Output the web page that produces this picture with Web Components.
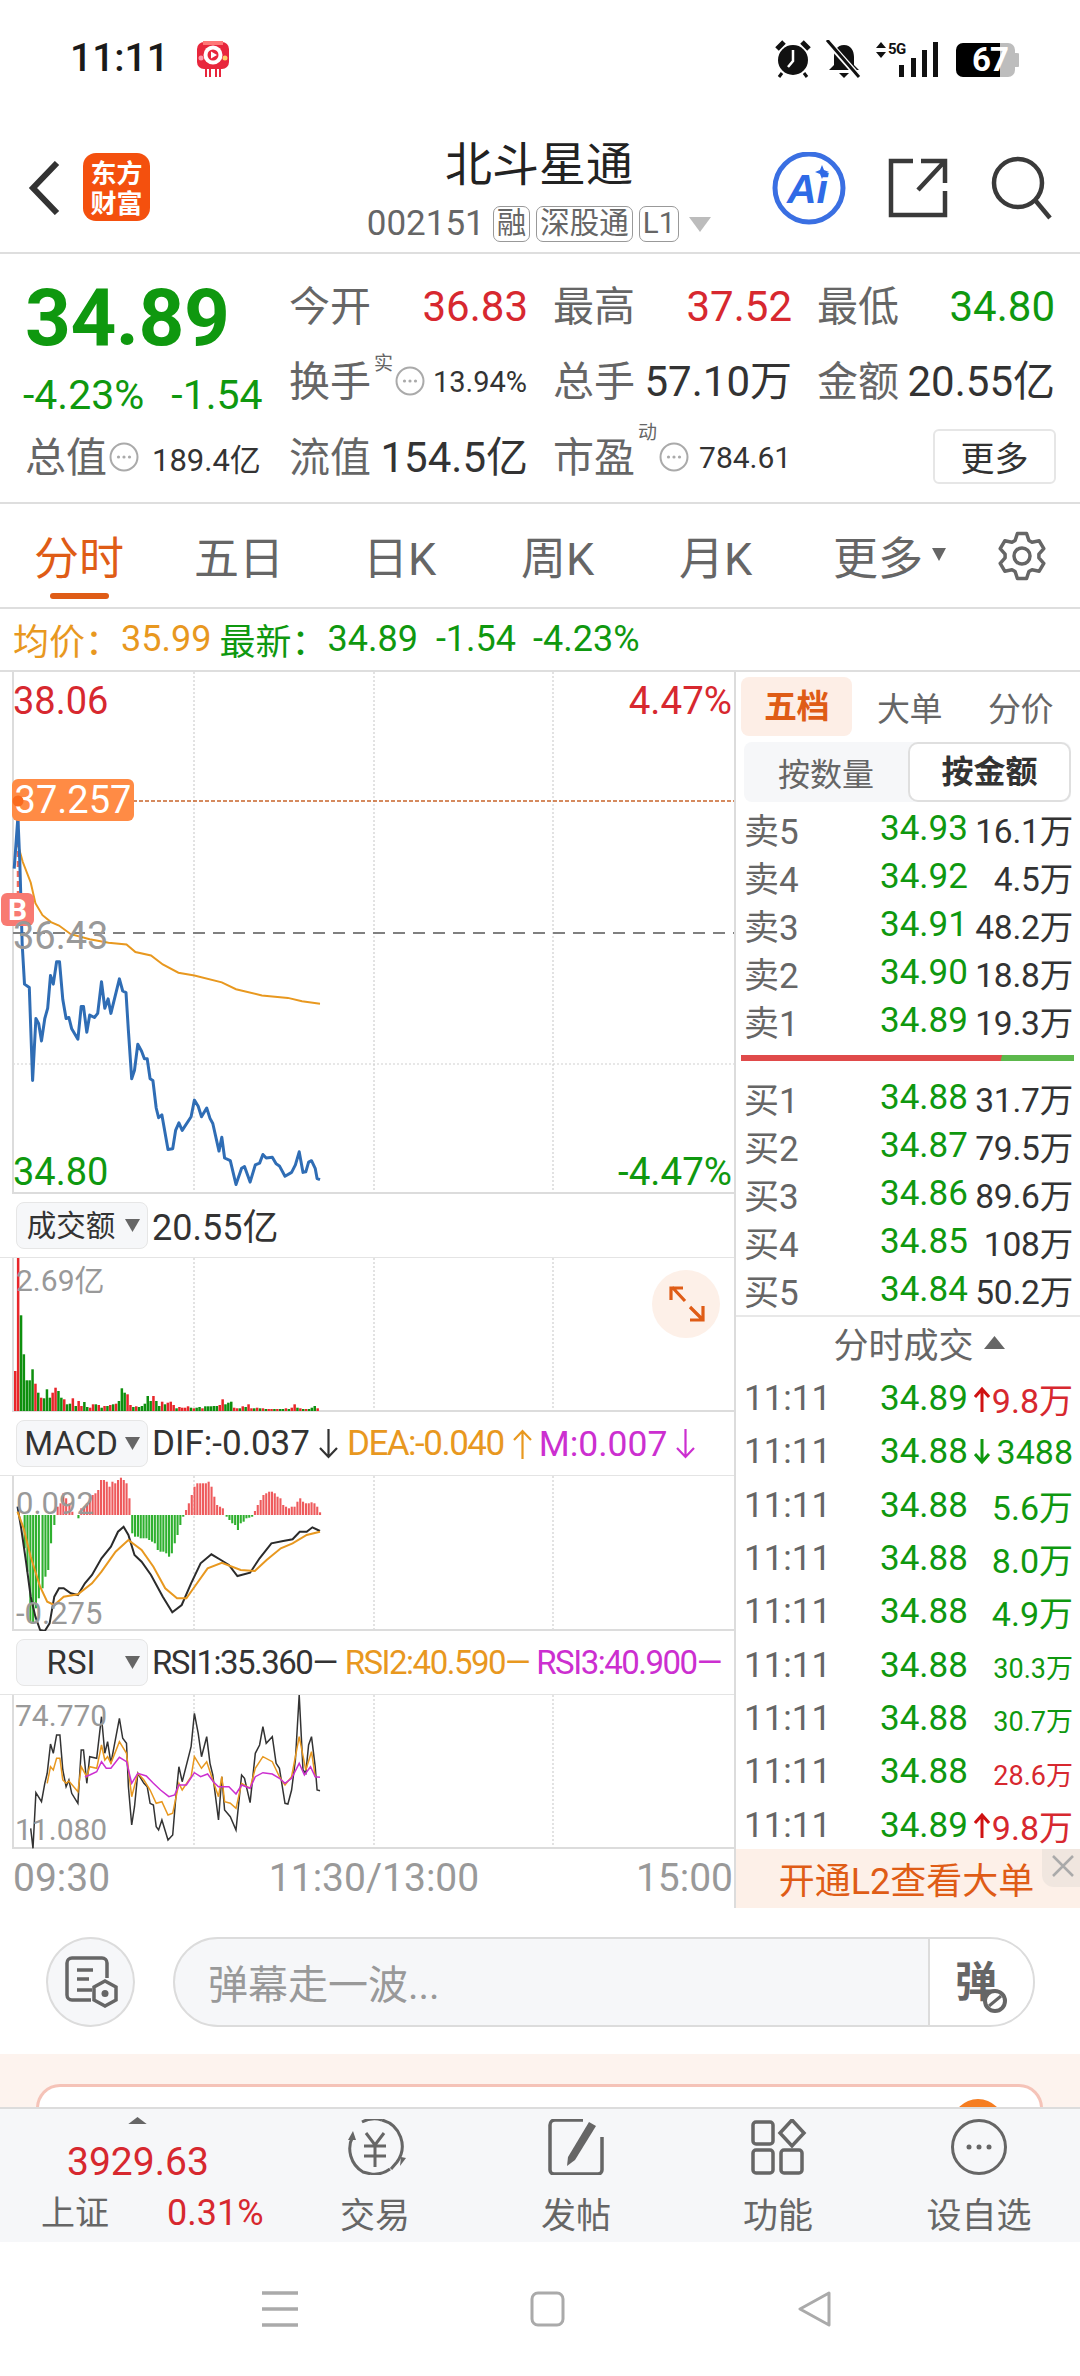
<!DOCTYPE html>
<html lang="zh"><head><meta charset="utf-8"><title>北斗星通</title>
<style>
html,body{margin:0;padding:0;background:#fff}
body{width:1080px;height:2376px;overflow:hidden;font-family:Roboto,"Noto Sans CJK SC",sans-serif;color:#333}
</style></head><body>
<app-page></app-page>
<script>
const BASE=`:host{display:block;box-sizing:border-box}*{box-sizing:border-box}svg{display:block;flex:none}`;
const RED='#d7282f',GREEN='#0f980f',ORANGE='#e8981f',MAG='#cc2fd0',LINE='#dcdcdc',ACC='#df5c16';
const D=(name,css,render)=>customElements.define(name,class extends HTMLElement{connectedCallback(){if(this.shadowRoot)return;this.attachShadow({mode:'open'}).innerHTML=`<style>${BASE}${css}</style>`+render(this)}});
const P=(a,sx,sy,oy)=>{let s=[];for(let i=0;i<a.length;i+=2)s.push((a[i]/sx).toFixed(1)+','+(a[i+1]/sy+oy).toFixed(1));return s.join(' ')};

D('app-page','',()=>`<status-bar></status-bar><stock-head></stock-head><quote-panel></quote-panel><period-tabs></period-tabs><avg-line></avg-line><market-main></market-main><danmu-bar></danmu-bar><promo-strip></promo-strip><bottom-nav></bottom-nav><sys-nav></sys-nav>`);

D('status-bar',`:host{height:100px;display:flex;align-items:flex-start;padding:40px 61px 0 70px}
.t{font:500 39px/37px Roboto,sans-serif;color:#1a1a1a;margin-top:0}
.a{margin-left:26px}.r{margin-left:auto;position:relative;width:244px;height:38px}
.r span{position:absolute;white-space:nowrap;font-family:Roboto,sans-serif;font-weight:700}
.g5{left:113px;top:1px;font-size:15px;line-height:16px;color:#111;letter-spacing:-.5px}
.b6{left:197px;top:2px;font-size:33px;line-height:36px;color:#fff;letter-spacing:-1px}`,()=>`<span class="t">11:11</span>
<svg class="a" width="36" height="38" viewBox="0 0 36 38"><path d="M2 9a7 7 0 0 1 7-7h18a7 7 0 0 1 7 7v13a7 7 0 0 1-7 7H9a7 7 0 0 1-7-7z" fill="#e8263c"/><path d="M8 1h20v4H8z" fill="#f77"/><circle cx="18" cy="15" r="9.500" fill="#fff"/><circle cx="18" cy="15" r="5.500" fill="#e8263c"/><path d="M16 11.500l6 3.500-6 3.500z" fill="#fff"/><circle cx="6" cy="18" r="2.500" fill="#f9a"/><circle cx="30" cy="18" r="2.500" fill="#fc6"/><path d="M11 29v8M15 29v8M21 29v8M25 29v8" stroke="#e8263c" stroke-width="2"/></svg>
<div class="r"><svg width="244" height="38" viewBox="0 0 244 38"><circle cx="18" cy="20" r="15" fill="#111"/><path d="M2 9l7-7M34 9l-7-7" stroke="#111" stroke-width="5"/><path d="M7 33l-3 4M29 33l3 4" stroke="#111" stroke-width="3"/><path d="M18 10v11l-5 6" stroke="#fff" stroke-width="2.500" fill="none"/>
<path d="M69 5c-7 0-10 6-10 12v8l-5 5h30l-5-5v-8c0-6-3-12-10-12z" fill="#111"/><path d="M64 33h10l-5 5z" fill="#111"/><path d="M53 2l31 35" stroke="#fff" stroke-width="6"/><path d="M52 0l32 37" stroke="#111" stroke-width="3"/>
<path d="M106 2l5 6h-10zM106 18l5-6h-10z" fill="#111"/>
<path d="M124 25h5v12h-5zM136 18h5v19h-5zM147 10h5v27h-5zM158 2h5v35h-5z" fill="#111"/>
<path d="M225 3h-37a7 7 0 0 0-7 7v20a7 7 0 0 0 7 7h37z" fill="#000"/><path d="M225 3h8a7 7 0 0 1 7 7v20a7 7 0 0 1-7 7h-8z" fill="#bdbdbd"/><path d="M240 13h2a3 3 0 0 1 3 3v8a3 3 0 0 1-3 3h-2z" fill="#bdbdbd"/></svg><span class="g5">5G</span><span class="b6">67</span></div>`);

D('stock-head',`:host{height:154px;border-bottom:2px solid #dedede;position:relative;display:grid;grid-template-columns:83px 67px 1fr;padding-top:53px}
.b{position:relative}.logo{width:67px;height:68px;border-radius:13px;background:#f4500e;color:#fff;font:700 26px/30px "Noto Sans CJK SC",sans-serif;text-align:center;padding-top:4px}
.c{position:absolute;left:0;right:0;top:35px;text-align:center;display:flex;flex-direction:column;align-items:center;pointer-events:none}
h1{font:400 47px/52px "Noto Sans CJK SC",sans-serif;color:#222;margin:0;width:188px;white-space:nowrap;transform:translateX(-1px)}
.l{display:flex;align-items:center;margin-top:18px;font:400 35px/38px Roboto,sans-serif;color:#666;transform:translateX(-1px)}
.g{border:1px solid #999;border-radius:7px;height:36px;font:400 29.5px/33px Roboto,"Noto Sans CJK SC",sans-serif;padding:0 3px;margin-left:6px;color:#666}
.g:first-of-type{margin-left:8px}
.tr{margin-left:10px}
.i{position:absolute;right:28px;top:52px;display:flex}`,()=>`<svg class="b" style="margin:8px 0 0 28px" width="32" height="54" viewBox="0 0 32 54"><path d="M29 2L5 27l24 25" fill="none" stroke="#333" stroke-width="6"/></svg><div class="logo">东方<br>财富</div><div></div>
<div class="c"><h1>北斗星通</h1><div class="l">002151<span class="g">融</span><span class="g">深股通</span><span class="g">L1</span><svg class="tr" width="22" height="15"><path d="M0 0h22L11 15z" fill="#bcbcbc"/></svg></div></div>
<svg class="i" width="280" height="74" viewBox="0 0 280 74"><circle cx="37" cy="36" r="34" fill="none" stroke="#3a6fe2" stroke-width="5"/><text x="15" y="51" font-family="Liberation Sans" font-style="italic" font-weight="700" font-size="41" fill="#2f6ae6">Ai</text><path d="M50 13l2 5 5 2-5 2-2 5-2-5-5-2 5-2z" fill="#2f6ae6"/>
<g fill="none" stroke="#3a3a3a" stroke-width="4.500"><path d="M141 9h-22v54h54V39"/><path d="M146 38l27-29M149 9h24v22"/><circle cx="246" cy="31" r="24" /><path d="M263 48l15 18"/></g></svg>`);

const hint=`<svg class="h" width="30" height="30" viewBox="0 0 30 30"><circle cx="15" cy="15" r="13.500" fill="#fff" stroke="#aaa" stroke-width="2"/><circle cx="9.500" cy="15" r="1.600" fill="#aaa"/><circle cx="15" cy="15" r="1.600" fill="#aaa"/><circle cx="20.500" cy="15" r="1.600" fill="#aaa"/></svg>`;
D('quote-panel',`:host{height:250px;border-bottom:2px solid #dedede;padding-top:15px;display:grid;grid-template-columns:289px 264px 264px 263px;grid-auto-rows:75.5px}
.c{display:flex;align-items:center;white-space:nowrap}
.sb{justify-content:space-between;padding-right:25px}
.l{font-size:41px;color:#666;line-height:46px}
.v{font-size:42px;line-height:46px;color:#333}
.big{font:700 80px/80px Roboto,sans-serif;color:${GREEN};padding:9px 0 0 25px;letter-spacing:-.5px}
.s2{padding:25px 0 0 23px;font-size:41px;color:${GREEN};gap:27px}
.f{font-size:31px;color:#333;margin-left:8px}
.sup{font-size:19px;color:#666;align-self:flex-start;margin:8px 2px 0 3px;line-height:22px}
.h{margin-top:-2px}
.c3{padding-left:25px}
.c3 .f{margin-left:13px}
.more{width:123px;height:55px;border:2px solid #e6e6e6;border-radius:6px;font-size:34px;display:flex;align-items:center;justify-content:center;color:#333;margin-left:116px;margin-top:-2px}
.red{color:${RED}}.grn{color:${GREEN}}`,()=>`
<div class="big">34.89</div><div class="c sb"><span class="l">今开</span><span class="v red">36.83</span></div><div class="c sb"><span class="l">最高</span><span class="v red">37.52</span></div><div class="c sb"><span class="l">最低</span><span class="v grn">34.80</span></div>
<div class="c s2"><span>-4.23%</span><span>-1.54</span></div><div class="c"><span class="l">换手</span><span class="sup">实</span>${hint}<span class="f" style="font-size:29px">13.94%</span></div><div class="c sb"><span class="l">总手</span><span class="v">57.10万</span></div><div class="c sb"><span class="l">金额</span><span class="v">20.55亿</span></div>
<div class="c c3"><span class="l">总值</span>${hint.replace('class="h"','class="h" style="margin-left:2px"')}<span class="f">189.4亿</span></div><div class="c sb"><span class="l">流值</span><span class="v">154.5亿</span></div><div class="c"><span class="l">市盈</span><span class="sup" style="margin-top:2px">动</span>${hint}<span class="f" style="margin-left:10px;font-size:30px">784.61</span></div><div class="c"><span class="more">更多</span></div>`);

const gear=(()=>{let d='',cx=25,cy=25;for(let i=0;i<6;i++){const a=i*Math.PI/3-Math.PI/2;const p=(r,o)=>(cx+r*Math.cos(a+o)).toFixed(1)+' '+(cy+r*Math.sin(a+o)).toFixed(1);d+=(i?'L':'M')+p(17,-.42)+'L'+p(23,-.2)+'L'+p(23,.2)+'L'+p(17,.42);}return d+'Z'})();
D('period-tabs',`:host{height:105px;border-bottom:2px solid #dedede;display:flex;padding-left:34px;position:relative}
span{font-size:45px;line-height:52px;margin-top:30px;color:#666;white-space:nowrap;display:block}
.on{color:${ACC};position:relative}.on::after{content:"";position:absolute;left:16px;top:59px;width:59px;height:6px;border-radius:3px;background:${ACC}}
.tr{margin:44px 0 0 9px}.g{margin:27px 0 0 51px}`,()=>`<span class="on" style="width:160px">分时</span><span style="width:169px">五日</span><span style="width:158px">日K</span><span style="width:158px">周K</span><span style="width:154px">月K</span><span>更多</span><svg class="tr" width="14" height="13"><path d="M0 0h14L7 13z" fill="#666"/></svg>
<svg class="g" width="50" height="50" viewBox="0 0 50 50"><path d="${gear}" fill="none" stroke="#666" stroke-width="3.500" stroke-linejoin="round"/><circle cx="25" cy="25" r="8" fill="none" stroke="#666" stroke-width="3.500"/></svg>`);

D('avg-line',`:host{height:63px;border-bottom:2px solid #dedede;display:flex;align-items:center;padding:0 0 1px 13px;font-size:36px;white-space:nowrap;color:${GREEN}}
.o{color:${ORANGE}}span{display:block}`,()=>`<span class="o">均价：</span><span class="o" style="margin-left:0">35.99</span><span style="margin-left:8px">最新：</span><span>34.89</span><span style="margin-left:18px">-1.54</span><span style="margin-left:17px">-4.23%</span>`);

const grid=(h,horiz='')=>`<path d="M194 0V${h}M374 0V${h}M553 0V${h}${horiz}" stroke="#cfcfcf" stroke-width="1.2" stroke-dasharray="2 2" fill="none"/><path d="M13 0V${h}M12 ${h-1}H734" stroke="#dcdcdc" stroke-width="2" fill="none"/>`;
const LBL=`:host{position:relative;width:734px}span{position:absolute;font-size:38px;line-height:44px;white-space:nowrap}`;

D('price-chart',LBL+`:host{height:522px}.tag{left:12px;top:107px;width:122px;height:42px;border-radius:6px;background:#ff8b45;color:#fff;text-align:center;line-height:42px}
.b{left:1px;top:221px;width:33px;height:33px;border-radius:6px;background:#f87a72;color:#fff;font:700 30px/33px Roboto,sans-serif;text-align:center}`,()=>{
const blue=[30,580,38,430,42,560,47,800,52,915,62,925,69,1195,76,1015,82,1030,88,1080,95,1015,101,985,107,890,113,915,120,850,126,850,133,960,140,1015,146,1012,152,1045,165,1075,172,980,177,980,184,1055,190,1005,200,1012,207,1000,215,908,222,985,229,958,235,1000,253,900,260,935,267,940,272,1050,279,1190,285,1165,292,1090,300,1110,306,1132,312,1132,318,1190,324,1195,331,1275,336,1303,343,1295,356,1395,366,1393,372,1340,379,1318,386,1340,405,1300,412,1252,420,1270,427,1300,438,1275,445,1305,451,1320,464,1400,470,1360,476,1420,488,1428,500,1497,512,1450,518,1445,530,1490,541,1440,550,1435,557,1410,564,1420,577,1418,585,1437,592,1443,604,1473,618,1462,626,1440,634,1402,642,1462,648,1460,654,1432,660,1428,668,1450,672,1480,678,1483];
const avg=[38,510,48,560,65,620,75,680,90,715,108,735,125,745,150,770,190,785,230,795,268,800,287,822,320,832,345,858,378,882,412,890,470,910,500,930,555,948,610,955,640,965,678,972];
return `<svg width="734" height="522" viewBox="0 0 734 522">${grid(522,'M13 392H734')}
<path d="M13 261H734" stroke="#808080" stroke-width="2" stroke-dasharray="12 8"/><path d="M13 129H734" stroke="#c8642a" stroke-width="1.500" stroke-dasharray="4 2"/>
<polyline points="${P(avg,2.119,2.904,-3)}" fill="none" stroke="${ORANGE}" stroke-width="2"/>
<path d="M18 129V225" stroke="#ef6c5e" stroke-width="2.500" stroke-dasharray="6 4"/>
<polyline points="${P(blue,2.119,2.904,-3)}" fill="none" stroke="#2f6db5" stroke-width="3" stroke-linejoin="round"/></svg>
<span style="left:13px;top:7px;color:${RED}">38.06</span><span style="right:2px;top:7px;color:${RED};font-size:38.5px">4.47%</span>
<span class="tag">37.257</span><svg style="position:absolute;left:12px;top:122px" width="14" height="14"><circle cx="6" cy="7" r="5.500" fill="#fa6a1e"/></svg>
<span class="b">B</span><span style="left:13px;top:242px;color:#999">36.43</span>
<span style="left:13px;top:478px;color:${GREEN}">34.80</span><span style="right:2px;top:478px;color:${GREEN};font-size:38.5px">-4.47%</span>`});

const sel=(t,fs)=>`<div class="box"><span style="font-size:${fs}px">${t}</span><svg width="15" height="13"><path d="M0 0h15L7.500 13z" fill="#666"/></svg></div>`;
D('ind-head',`:host{height:64px;width:734px;display:flex;align-items:center;padding:0 0 0 16px;white-space:nowrap;font-size:36px;color:#333;border-bottom:1.5px solid #e4e4e4}
.box{width:132px;height:47px;flex:none;background:#f6f7f9;border:1.5px solid #e6e6e6;border-radius:8px;display:flex;align-items:center;margin-right:4px;position:relative}
.box span{width:108px;text-align:center;color:#333;line-height:40px}
b{font-weight:400;display:block}.o{color:${ORANGE}}.m{color:${MAG}}
.ar{margin:0 9px 0 9px}`,(e)=>{
const a=e.getAttribute('t');
if(a==='v')return sel('成交额',29.500)+`<b style="margin-top:-4px">20.55亿</b>`;
const ar=(up,c,s='')=>`<svg class="ar" style="${s}" width="19" height="30" viewBox="0 0 19 30"><path d="${up?'M9.500 30V2M1 11l8.500-9 8.500 9':'M9.500 0v28M1 19l8.500 9 8.500-9'}" fill="none" stroke="${c}" stroke-width="2.200"/></svg>`;
if(a==='m')return sel('MACD',33)+`<b style="font-size:35px">DIF:-0.037</b>${ar(0,'#333')}<b class="o" style="font-size:35px;letter-spacing:-1.500px">DEA:-0.040</b>${ar(1,ORANGE,'margin-right:7px')}<b class="m" style="font-size:35.5px">M:0.007</b>${ar(0,MAG)}`;
const rs=n=>`font-size:33px;letter-spacing:-1.500px;margin-left:${n}px`;
return sel('RSI',33)+`<b style="${rs(0)}">RSI1:35.360—</b><b class="o" style="${rs(8)}">RSI2:40.590—</b><b class="m" style="${rs(7)}">RSI3:40.900—</b>`});

D('vol-chart',LBL+`:host{height:154px}span{font-size:30px;color:#999}`,()=>{
const h=[120,460,-287,-170,-92,-92,-125,82,-55,40,-38,-65,-40,55,70,-60,-40,35,-20,-22,38,-15,30,15,-27,-12,10,20,-20,18,-10,15,-15,18,-20,22,-30,-68,-55,50,18,-12,14,-12,-15,-22,-45,-30,45,-30,-15,28,-20,25,28,18,-8,12,10,10,14,-10,8,-10,-12,8,-14,-14,-14,-15,-15,18,35,-20,-25,-28,10,8,-8,14,-12,20,8,-8,10,-8,8,-6,6,6,-6,6,-6,-6,8,-6,10,20,-10,8,-6,6,-6,-10,-15,8];
let b='';h.forEach((v,i)=>{const x=14+i*2.88,ht=Math.abs(v)/3;b+=`<rect x="${x.toFixed(1)}" y="${(153-ht).toFixed(1)}" width="2.5" height="${ht.toFixed(1)}" fill="${v>0?'#e8262a':'#0e8f0e'}"/>`});
return `<svg width="734" height="154" viewBox="0 0 734 154">${grid(154)}${b}
<circle cx="686" cy="46" r="34" fill="#fdf0e8"/><path d="M672 29l13 14M671 42V30h12M703 62l-13-13M703 48v14h-13" fill="none" stroke="${ACC}" stroke-width="3.200"/></svg><span style="left:16px;top:1px">2.69亿</span>`});

D('macd-chart',LBL+`:host{height:155px}span{font-size:31px;color:#999}`,()=>{
const m=[[50,-100],[56,-170],[62,-320],[68,-325],[74,-280],[80,-250],[88,-220],[94,-185],[100,-165],[106,-85],[113,-30],[120,25],[126,35],[132,65],[138,50],[145,35],[151,10],[164,-10],[170,20],[176,25],[182,35],[188,50],[194,60],[200,65],[206,75],[212,105],[218,105],[224,100],[230,85],[236,100],[242,95],[248,105],[254,112],[260,105],[266,95],[272,50],[278,-55],[284,-65],[290,-65],[296,-70],[302,-70],[308,-70],[314,-75],[320,-80],[326,-85],[332,-105],[338,-110],[344,-110],[350,-115],[356,-125],[362,-115],[368,-85],[374,-60],[380,-30],[386,-5],[392,15],[398,35],[404,60],[410,85],[416,95],[422,95],[428,95],[434,95],[440,100],[446,85],[452,55],[458,30],[464,25],[470,20],[478,-5],[484,-15],[490,-25],[496,-30],[502,-45],[508,-25],[514,-20],[520,-10],[526,-8],[532,-5],[538,12],[544,30],[550,45],[556,60],[562,65],[568,70],[574,70],[580,65],[586,55],[592,50],[598,30],[604,25],[610,20],[616,25],[622,25],[628,40],[634,50],[640,40],[646,35],[652,35],[658,38],[664,35],[670,25],[676,8]];
let b='';m.forEach(([x,v])=>{const ht=Math.abs(v)/3,X=x/2.119;b+=`<rect x="${X.toFixed(1)}" y="${(v>0?39-ht:39).toFixed(1)}" width="2.1" height="${ht.toFixed(1)}" fill="${v>0?'#ee5a5c':'#2fb02f'}"/>`});
const k=[37,920,45,985,55,1085,65,1190,75,1250,85,1290,95,1293,105,1270,115,1190,125,1165,135,1165,150,1180,165,1185,180,1150,195,1125,215,1075,235,1040,250,995,262,980,272,1005,285,1065,300,1085,320,1125,345,1190,365,1237,385,1215,405,1150,425,1090,448,1063,468,1080,485,1095,503,1128,530,1118,550,1075,575,1030,600,1023,620,1018,635,995,650,995,662,982,678,993];
const o=[37,935,50,985,65,1070,85,1160,100,1205,115,1215,135,1190,165,1183,195,1150,215,1115,245,1055,272,1020,300,1050,325,1100,350,1165,375,1195,395,1195,415,1155,440,1105,470,1088,510,1110,540,1113,565,1080,595,1045,620,1030,650,1005,678,995];
return `<svg width="734" height="155" viewBox="0 0 734 155">${grid(155)}${b}
<polyline points="${P(k,2.119,3,-276)}" fill="none" stroke="#2b2b2b" stroke-width="2"/><polyline points="${P(o,2.119,3,-276)}" fill="none" stroke="${ORANGE}" stroke-width="2"/></svg>
<span style="left:16px;top:6px">0.092</span><span style="left:16px;top:116px">-0.275</span>`});

D('rsi-chart',LBL+`:host{height:154px}span{font-size:30px;color:#999}`,()=>{
const k=[65,625,70,685,76,518,88,545,95,490,100,460,107,372,113,400,120,345,127,345,133,450,140,500,146,480,152,520,165,550,172,390,177,390,184,490,190,410,205,415,215,290,222,400,228,365,235,430,253,295,260,355,268,370,272,500,279,615,285,560,292,460,305,490,312,500,318,550,325,555,331,620,336,630,343,600,356,660,366,645,372,540,379,440,386,485,405,380,412,280,420,340,427,410,438,350,445,430,451,465,463,600,470,470,476,570,488,590,500,630,512,465,518,475,530,548,541,400,550,375,557,320,564,370,577,350,585,430,592,445,604,550,610,552,618,510,626,420,634,225,642,450,648,460,654,375,660,350,668,440,672,510,678,512];
const o=[100,490,107,440,113,450,120,415,127,415,133,480,140,490,146,483,165,515,172,440,184,470,190,440,205,445,215,375,222,420,228,410,235,430,253,365,268,400,279,530,292,460,305,480,318,510,331,550,343,545,356,585,366,580,379,490,386,510,405,470,412,410,427,445,438,425,451,480,463,530,470,470,476,545,488,550,500,565,512,490,530,505,541,445,557,410,577,425,592,470,604,495,618,470,634,350,648,450,660,395,668,470];
const m=[180,470,190,465,205,455,215,425,225,445,235,445,253,412,268,425,279,490,292,460,310,468,325,490,340,510,358,530,370,525,379,495,395,495,412,458,425,470,440,462,452,485,463,500,485,500,500,522,512,495,530,505,541,470,557,458,577,462,592,475,604,490,618,475,634,430,645,465,658,440,668,470,678,472];
return `<svg width="734" height="154" viewBox="0 0 734 154">${grid(154)}
<polyline points="${P(k,2.119,3,-75)}" fill="none" stroke="#333" stroke-width="1.500"/><polyline points="${P(o,2.119,3,-75)}" fill="none" stroke="${ORANGE}" stroke-width="1.500"/><polyline points="${P(m,2.119,3,-75)}" fill="none" stroke="${MAG}" stroke-width="1.500"/></svg>
<span style="left:15px;top:-1px">74.770</span><span style="left:15px;top:113px">11.080</span>`});

D('time-axis',`:host{height:59px;width:734px;display:flex;justify-content:space-between;padding:7px 1px 0 13px;font-size:39px;line-height:44px;color:#999}`,()=>`<span>09:30</span><span style="transform:translateX(1px)">11:30/13:00</span><span>15:00</span>`);

D('market-main',`:host{display:grid;grid-template-columns:736px 344px;height:1236px}
.l{border-right:2px solid #dcdcdc}`,()=>`<div class="l"><price-chart></price-chart><ind-head t="v"></ind-head><vol-chart></vol-chart><ind-head t="m"></ind-head><macd-chart></macd-chart><ind-head t="r"></ind-head><rsi-chart></rsi-chart><time-axis></time-axis></div><depth-panel></depth-panel>`);

D('depth-panel',`:host{display:flex;flex-direction:column;height:1236px;padding-top:5px}
:host>*{flex:none}
.tabs{display:flex;padding-left:5px;font-size:33px;color:#666;height:59px;align-items:center}
.tabs div{width:111px;text-align:center;letter-spacing:-.5px}.tabs .on{height:59px;line-height:59px;background:#fdeee6;color:${ACC};border-radius:8px;font-weight:700}
.tg{display:flex;margin:6px 0 0 8px;width:327px;height:60px;background:#f6f7f9;border-radius:8px;font-size:32px;color:#666;align-items:center}
.tg div{width:164px;text-align:center}.tg .on{width:163px;height:60px;line-height:56px;border:2px solid #dfdfdf;border-radius:10px;background:#fff;color:#333;font-weight:700}
.bar{margin:12px 0 0 5px;width:333px;height:6px;background:linear-gradient(100deg,#e04a4a 78%,#5cb84c 78.2%)}
.ft{height:57px;border-top:2px solid #e8e8e8;margin-top:3px;display:flex;align-items:center;justify-content:center;font-size:35px;color:#666;gap:10px;padding-left:22px;padding-bottom:5px}
.bn{margin-top:-3px;height:59px;background:#fdf0e8;color:${ACC};font-size:36px;display:flex;align-items:center;justify-content:center;position:relative;padding-right:3px}
.x{position:absolute;right:0;top:0;width:38px;height:38px;background:#f0e6df;border-bottom-left-radius:12px}`,()=>{
const ask=[['卖5','34.93','16.1万'],['卖4','34.92','4.5万'],['卖3','34.91','48.2万'],['卖2','34.90','18.8万'],['卖1','34.89','19.3万']];
const bid=[['买1','34.88','31.7万'],['买2','34.87','79.5万'],['买3','34.86','89.6万'],['买4','34.85','108万'],['买5','34.84','50.2万']];
const tr=[['34.89','u','9.8万','r',0],['34.88','d','3488','g',0],['34.88','','5.6万','g',0],['34.88','','8.0万','g',0],['34.88','','4.9万','g',0],['34.88','','30.3万','g',1],['34.88','','30.7万','g',1],['34.88','','28.6万','r',1],['34.89','u','9.8万','r',0]];
return `<div class="tabs"><div class="on">五档</div><div style="margin-left:2px">大单</div><div>分价</div></div>
<div class="tg"><div>按数量</div><div class="on">按金额</div></div>
<div style="margin-top:1px">${ask.map(r=>`<depth-row a="${r[0]}" b="${r[1]}" c="${r[2]}"></depth-row>`).join('')}</div>
<div class="bar"></div><div style="margin-top:11px">${bid.map(r=>`<depth-row a="${r[0]}" b="${r[1]}" c="${r[2]}"></depth-row>`).join('')}</div>
<div class="ft">分时成交<svg width="21" height="13"><path d="M10.500 0L21 13H0z" fill="#666"/></svg></div>
${tr.map(r=>`<trade-row p="${r[0]}" ar="${r[1]}" v="${r[2]}" c="${r[3]}" s="${r[4]}"></trade-row>`).join('')}
<div class="bn">开通L2查看大单<div class="x"><svg width="38" height="34"><path d="M11 7l20 20M31 7L11 27" stroke="#aaa" stroke-width="2.500"/></svg></div></div>`});
D('depth-row',`:host{height:48px;display:grid;grid-template-columns:136px 90px 1fr;padding:0 7px 0 8px;align-items:center;white-space:nowrap}
.a{font-size:35px;color:#666}.b{font-size:35px;color:${GREEN}}.c{font-size:33.500px;color:#333;text-align:right;letter-spacing:-.2px}`,e=>`<span class="a">${e.getAttribute('a')}</span><span class="b">${e.getAttribute('b')}</span><span class="c">${e.getAttribute('c')}</span>`);
D('trade-row',`:host{height:53.300px;display:grid;grid-template-columns:136px 90px 1fr;padding:0 7px 0 8px;align-items:center;white-space:nowrap;font-size:35px}
.t{color:#666}.p{color:${GREEN}}.v{display:flex;justify-content:flex-end;align-items:center;font-size:34px}
.v svg{margin-right:auto;margin-left:4px}`,e=>{const ar=e.getAttribute('ar'),c=e.getAttribute('c')==='r'?RED:GREEN,s=e.getAttribute('s')==='1';
const arrow=ar==='u'?`<svg width="16" height="26" viewBox="0 0 16 26"><path d="M8 26V3M1 11l7-8 7 8" fill="none" stroke="#cf1212" stroke-width="3"/></svg>`:ar==='d'?`<svg width="16" height="26" viewBox="0 0 16 26"><path d="M8 0v23M1 15l7 8 7-8" fill="none" stroke="${GREEN}" stroke-width="3"/></svg>`:'';
return `<span class="t">11:11</span><span class="p">${e.getAttribute('p')}</span><span class="v" style="${s?'font-size:27px;margin-top:3px;':''}">${arrow}<span style="color:${c}">${e.getAttribute('v')}</span></span>`});

D('danmu-bar',`:host{height:146px;display:flex;align-items:flex-start;padding:29px 0 0 46px}
.ic{width:89px;height:90px;border-radius:50%;background:#f6f7f9;border:2px solid #dcdcdc;display:flex;align-items:center;justify-content:center}
.in{margin-left:38px;width:862px;height:90px;border-radius:45px;background:#f6f7f9;border:2px solid #dcdcdc;display:flex;align-items:center;overflow:hidden}
.ph{flex:1;padding-left:33px;font-size:40px;color:#999;white-space:nowrap}
.r{width:105px;height:100%;border-left:2px solid #dcdcdc;background:#fff;position:relative;padding:0 0 0 25px;font:700 42px/80px "Noto Sans CJK SC",sans-serif;color:#666}
.r svg{position:absolute;left:53px;top:50px}`,()=>`<div class="ic"><svg width="56" height="56" viewBox="0 0 56 56"><path d="M44 24V9a5 5 0 0 0-5-5H9a5 5 0 0 0-5 5v32a5 5 0 0 0 5 5h19" fill="none" stroke="#666" stroke-width="3.500"/><path d="M14 16h16M14 25h12M14 36h15" stroke="#666" stroke-width="3.500" fill="none"/><path d="M42 27l11 6v13l-11 6-11-6V33z" fill="#f6f7f9" stroke="#666" stroke-width="3.500"/><circle cx="42" cy="39.500" r="3.500" fill="#666"/></svg></div>
<div class="in"><span class="ph">弹幕走一波...</span><div class="r">弹<svg width="24" height="24"><circle cx="12" cy="12" r="10" fill="#fff" stroke="#666" stroke-width="4"/><path d="M6 17L18 7" stroke="#666" stroke-width="3"/></svg></div></div>`);

D('promo-strip',`:host{height:53px;background:#fdf3ee;padding:30px 37px 0 36px;overflow:hidden}
.card{height:50px;border:3px solid #f5c3b8;border-bottom:0;border-radius:24px 24px 0 0;background:#fff;position:relative}
.dot{position:absolute;left:913px;top:12px;width:52px;height:52px;border-radius:50%;background:#f57d21}`,()=>`<div class="card"><div class="dot"></div></div>`);

D('bottom-nav',`:host{height:135px;background:#f6f7f9;border-top:2px solid #dcdcdc;display:grid;grid-template-columns:274px 202px 200px 204px 200px}
.i{position:relative;display:flex;flex-direction:column;align-items:center;padding-top:10px;font-size:35px;color:#666;white-space:nowrap}
.i svg{height:56px;width:70px}.i span{margin-top:20px;line-height:44px}
.idx{display:grid;grid-template-columns:126px 1fr;padding:8px 0 0 41px;color:${RED};font-size:36px;position:relative}
.idx .tr{grid-column:1/3;margin-left:86px;height:7px}
.num{grid-column:1/3;font-size:39px;line-height:44px;margin:9px 0 0 26px}
.sh{color:#666;font-size:34px;line-height:44px;margin-top:0}.pc{line-height:44px;margin-top:0}`,()=>`<div class="idx"><svg class="tr" width="21" height="8"><path d="M10.500 0L21 8H0z" fill="#666"/></svg><div class="num">3929.63</div><div class="sh">上证</div><div class="pc">0.31%</div></div>
<div class="i"><svg viewBox="0 0 70 56"><path d="M13 17a27 27 0 0 0 10 36l8 2M42 1a27 27 0 0 1 15 42l-6 7" fill="none" stroke="#666" stroke-width="3"/><path d="M22 3a27 27 0 0 1 20-2M50 50a27 27 0 0 1-19 5" fill="none" stroke="#666" stroke-width="3"/><path d="M8 21l5-9 3 9zM61 38l5 1-6 8z" fill="#666"/><path d="M26 14l9 12 9-12M24 27h22M24 37h22M35 26v22" fill="none" stroke="#666" stroke-width="3"/></svg><span>交易</span></div>
<div class="i"><svg viewBox="0 0 70 56"><path d="M42 1H14a5 5 0 0 0-5 5v45a4 4 0 0 0 4 4h44a4 4 0 0 0 4-4V18" fill="none" stroke="#666" stroke-width="3.500"/><path d="M27 38L48 3l7 4-21 34-8 6z" fill="#666"/></svg><span>发帖</span></div>
<div class="i"><svg viewBox="0 0 70 56"><g fill="none" stroke="#666" stroke-width="3.500"><rect x="10" y="3" width="20" height="22" rx="3"/><path d="M49 1l12 13-12 13-12-13z"/><rect x="10" y="31" width="20" height="23" rx="3"/><rect x="38" y="31" width="21" height="23" rx="3"/></g></svg><span>功能</span></div>
<div class="i" style="padding-right:2px"><svg viewBox="0 0 70 56"><circle cx="35" cy="28" r="26.500" fill="none" stroke="#666" stroke-width="3"/><circle cx="25" cy="28" r="2.500" fill="#666"/><circle cx="35" cy="28" r="2.500" fill="#666"/><circle cx="45" cy="28" r="2.500" fill="#666"/></svg><span>设自选</span></div>`);

D('sys-nav',`:host{height:133px;display:flex;padding:49px 0 0 262px}`,()=>`<svg width="36" height="36" viewBox="0 0 36 36"><path d="M0 2h36M0 18h36M0 34h36" stroke="#aaa" stroke-width="3.500"/></svg>
<svg style="margin-left:232px" width="36" height="36" viewBox="0 0 36 36"><rect x="2" y="2" width="31" height="32" rx="6" fill="none" stroke="#aaa" stroke-width="3"/></svg>
<svg style="margin-left:231px" width="36" height="36" viewBox="0 0 36 36"><path d="M32 2L3 18l29 16z" fill="none" stroke="#aaa" stroke-width="3" stroke-linejoin="round"/></svg>`);
</script>
</body></html>
